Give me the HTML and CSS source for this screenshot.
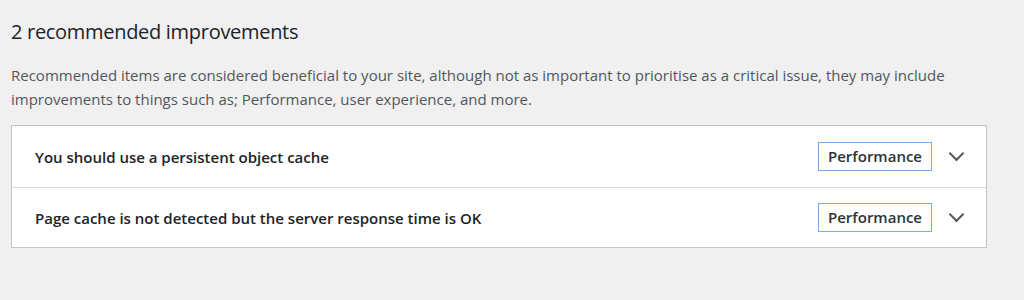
FILE: index.html
```html
<!DOCTYPE html>
<html lang="en">
<head>
  <meta charset="UTF-8" />
  <title>Site Health</title>
  <link rel="stylesheet" href="styles.css">
</head>
<body>
  <div class="health-section">
    <h2 class="site-health-issues-count">2 recommended improvements</h2>
    <p class="issues-desc">Recommended items are considered beneficial to your site, although not as important to prioritise as a critical issue, they may include improvements to things such as; Performance, user experience, and more.</p>

    <div class="health-check-accordion">
      <div class="accordion-row">
        <span class="title">You should use a persistent object cache</span>
        <span class="badge blue">Performance</span>
        <span class="icon"></span>
      </div>
      <div class="accordion-row">
        <span class="title">Page cache is not detected but the server response time is OK</span>
        <span class="badge blue">Performance</span>
        <span class="icon"></span>
      </div>
    </div>
  </div>
</body>
</html>
```

FILE: styles.css
```css
body {
  margin: 0;
  background-color: #f0f0f1;
  font-family: "Open Sans", "Noto Sans", sans-serif;
  color: #3c434a;
}
.health-section {
  width: 976px;
  margin-left: 11px;
  padding-top: 18px;
}
.site-health-issues-count {
  margin: 0;
  font-size: 20px;
  font-weight: 400;
  line-height: 28px;
  color: #1d2327;
  letter-spacing: -0.3px;
}
.issues-desc {
  margin: 17px 0 14px;
  font-size: 15px;
  line-height: 24px;
  color: #50575e;
}
.health-check-accordion {
  background: #fff;
  border: 1px solid #c3c4c7;
}
.accordion-row {
  display: flex;
  align-items: center;
  height: 61px;
  padding: 0 20px 0 23px;
}
.accordion-row + .accordion-row {
  height: 59px;
  border-top: 1px solid #dcdcde;
}
.title {
  flex: 1;
  font-size: 15px;
  font-weight: 600;
  color: #1d2327;
}
.badge {
  font-size: 15px;
  font-weight: 600;
  color: #2c3338;
  padding: 3px 9px 4px;
}
.badge.blue {
  border: 1px solid #72aee6;
}
.icon {
  width: 9px;
  height: 9px;
  margin: -6px 4px 0 19px;
  border-right: 2px solid #50575e;
  border-bottom: 2px solid #50575e;
  transform: rotate(45deg);
}
```
